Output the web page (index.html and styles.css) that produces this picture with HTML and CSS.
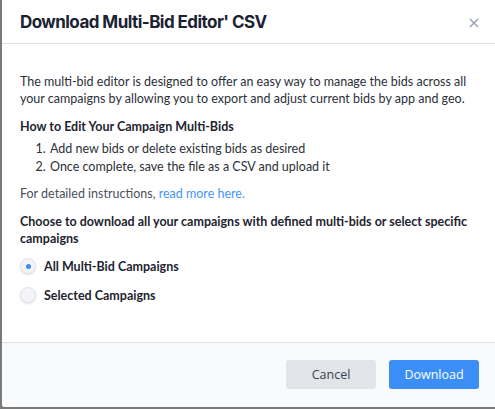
FILE: index.html
```html
<!DOCTYPE html>
<html>
<head>
<meta charset="utf-8">
<link rel="stylesheet" href="styles.css">
</head>
<body>
<div class="modal">
  <div class="modal-header">
    <h1 class="title">Download Multi-Bid Editor' CSV</h1>
    <button class="close" aria-label="Close">
      <svg width="10" height="10" viewBox="0 0 10 10"><path d="M1 1L9 9M9 1L1 9" stroke="#8f9bb3" stroke-width="1.3" fill="none"/></svg>
    </button>
  </div>
  <div class="modal-body">
    <p class="intro">The multi-bid editor is designed to offer an easy way to manage the bids across all your campaigns by allowing you to export and adjust current bids by app and geo.</p>
    <p class="subhead">How to Edit Your Campaign Multi-Bids</p>
    <ol class="steps">
      <li>Add new bids or delete existing bids as desired</li>
      <li>Once complete, save the file as a CSV and upload it</li>
    </ol>
    <p class="more">For detailed instructions, <a href="#" class="link">read more here.</a></p>
    <p class="choose">Choose to download all your campaigns with defined multi-bids or select specific campaigns</p>
    <div class="options">
      <label class="option"><span class="radio checked"></span>All Multi-Bid Campaigns</label>
      <label class="option"><span class="radio"></span>Selected Campaigns</label>
    </div>
  </div>
  <div class="modal-footer">
    <button class="btn btn-cancel">Cancel</button>
    <button class="btn btn-primary">Download</button>
  </div>
</div>
</body>
</html>
```

FILE: styles.css
```css
html, body {
  margin: 0;
  padding: 0;
  background: #7a7a7a;
  height: 409px;
  overflow: hidden;
}
body {
  padding: 0 0 2px 2px;
  box-sizing: border-box;
  font-family: "Lato", "Open Sans", sans-serif;
}
.modal {
  background: #fff;
  height: 407px;
  border-bottom-left-radius: 3px;
  display: flex;
  flex-direction: column;
  overflow: hidden;
}
.modal-header {
  height: 44px;
  box-sizing: border-box;
  border-bottom: 1px solid #dde1e6;
  display: flex;
  align-items: center;
  justify-content: space-between;
  padding: 0 16px 0 18px;
}
.title {
  margin: 0;
  font-family: "Inter", "Liberation Sans", sans-serif;
  font-weight: 700;
  font-size: 17px;
  color: #1a2233;
  letter-spacing: -0.55px;
}
.close {
  background: none;
  border: 0;
  padding: 0;
  display: flex;
  margin-top: 2px;
}
.modal-body {
  flex: 1;
  padding: 29px 18px 0 18px;
  font-size: 12.5px;
  color: #2b3039;
  line-height: 17px;
}
.modal-body p { margin: 0; }
.intro { margin-bottom: 11px !important; }
.subhead { font-weight: 700; color: #1e2430; margin-bottom: 5px !important; }
.steps {
  margin: 0 0 9px 0;
  padding-left: 29px;
  color: #2b3039;
}
.steps li { line-height: 18px; padding-left: 1px; }
.more { color: #4a505a; margin-bottom: 11px !important; }
.link { color: #4596f5; text-decoration: none; }
.choose { font-weight: 700; color: #1e2430; margin-bottom: 11px !important; }
.options { display: flex; flex-direction: column; gap: 13px; }
.option {
  display: flex;
  align-items: center;
  gap: 8px;
  font-weight: 700;
  color: #1e2430;
  height: 16px;
}
.radio {
  width: 14px;
  height: 14px;
  border-radius: 50%;
  background: #f2f4f7;
  border: 1px solid #e3e6ea;
  box-shadow: 0 1px 2px rgba(0,0,0,0.12);
  display: flex;
  align-items: center;
  justify-content: center;
  flex: none;
}
.radio.checked::after {
  content: "";
  width: 5px;
  height: 5px;
  border-radius: 50%;
  background: #3a8ef6;
}
.modal-footer {
  height: 65px;
  box-sizing: border-box;
  border-top: 1px solid #dde1e6;
  background: #f8fafc;
  display: flex;
  align-items: center;
  justify-content: flex-end;
  gap: 13px;
  padding: 0 16px 2px 0;
}
.btn {
  width: 90px;
  height: 29px;
  border-radius: 3px;
  border: 0;
  font-family: "Open Sans", "Noto Sans", sans-serif;
  font-size: 12.5px;
}
.btn-cancel { background: #e1e5ea; color: #3b4250; }
.btn-primary { background: #3a8ef6; color: #fff; }
```
